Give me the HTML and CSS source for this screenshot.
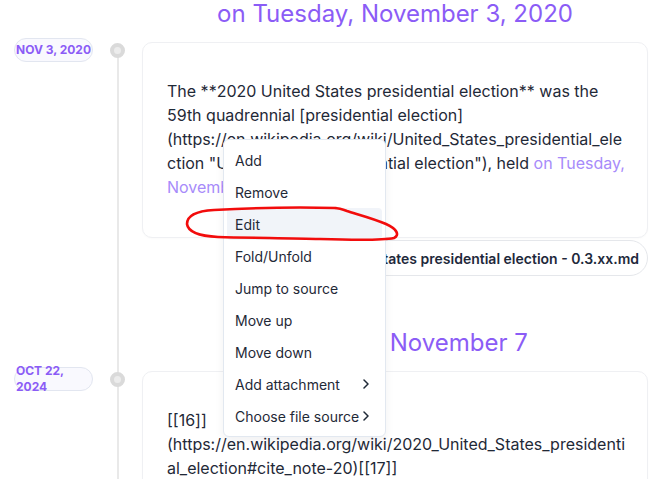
FILE: index.html
```html
<!DOCTYPE html>
<html lang="en">
<head>
<meta charset="utf-8">
<title>Timeline</title>
<link rel="stylesheet" href="styles.css">
</head>
<body>
<div class="timeline">
  <section class="item">
    <h2 class="item-heading">on Tuesday, November 3, 2020</h2>
    <div class="rail">
      <span class="date-pill"><span>NOV 3, 2020</span></span>
      <span class="dot"></span>
    </div>
    <div class="content">
      <div class="card">
        <p>The **2020 United States presidential election** was the 59th quadrennial [presidential election](https://en.wikipedia.org/wiki/United_States_presidential_election "United States presidential election"), held <span class="hl">on Tuesday, November 3, 2020</span>.</p>
      </div>
      <div class="source-row">
        <span class="source-pill">2020 United States presidential election - 0.3.xx.md</span>
      </div>
    </div>
  </section>
  <section class="item">
    <h2 class="item-heading item-heading--shifted">Saturday, November 7</h2>
    <div class="rail">
      <span class="date-pill"><span>OCT 22, 2024</span></span>
      <span class="dot"></span>
    </div>
    <div class="content">
      <div class="card">
        <p>[[16]](https://en.wikipedia.org/wiki/2020_United_States_presidential_election#cite_note-20)[[17]]</p>
      </div>
    </div>
  </section>
</div>

<ul class="context-menu">
  <li class="menu-item">Add</li>
  <li class="menu-item">Remove</li>
  <li class="menu-item is-hover">Edit</li>
  <li class="menu-item">Fold/Unfold</li>
  <li class="menu-item">Jump to source</li>
  <li class="menu-item">Move up</li>
  <li class="menu-item">Move down</li>
  <li class="menu-item">Add attachment <svg class="chev" width="6" height="10" viewBox="0 0 6 10"><path d="M1 1l4 4-4 4" fill="none" stroke="#1f2937" stroke-width="1.5" stroke-linecap="round" stroke-linejoin="round"/></svg></li>
  <li class="menu-item">Choose file source <svg class="chev" width="6" height="10" viewBox="0 0 6 10"><path d="M1 1l4 4-4 4" fill="none" stroke="#1f2937" stroke-width="1.5" stroke-linecap="round" stroke-linejoin="round"/></svg></li>
</ul>

<svg class="annotation" width="649" height="479" viewBox="0 0 649 479">
  <path d="M336 208 C 300 207, 250 208, 214 210 C 196 211, 187 216, 187 224 C 188 232, 199 236, 218 237 C 250 238, 290 238, 320 239 C 350 240, 380 241, 394 238 C 400 235, 397 229, 386 224 C 372 218, 356 214, 347 211 C 342 209, 339 208, 334 208"
        fill="none" stroke="#f20c0c" stroke-width="2.6" stroke-linecap="round" stroke-linejoin="round"/>
</svg>
</body>
</html>
```

FILE: styles.css
```css
html, body {
  margin: 0;
  padding: 0;
  overflow: hidden;
  background: #ffffff;
}

body {
  font-family: Inter, "Noto Sans", sans-serif;
  color: #1f2937;
  position: relative;
  width: 649px;
  height: 479px;
}

.timeline {
  position: relative;
}

.timeline::before {
  content: "";
  position: absolute;
  left: 117px;
  top: 49px;
  bottom: 0;
  width: 2px;
  background: #e9e9e9;
}

.item {
  display: grid;
  grid-template-columns: 142px 506px;
  align-items: start;
}

.item + .item {
  margin-top: 53px;
}

.item-heading {
  grid-column: 2;
  grid-row: 1;
  margin: 0 0 10px;
  text-align: center;
  font-size: 24px;
  line-height: 28px;
  font-weight: 400;
  color: #8b5cf6;
}

.item-heading--shifted {
  padding-left: 14px;
}

.rail {
  grid-column: 1;
  grid-row: 2;
  display: flex;
  align-items: center;
  height: 24px;
  padding-left: 14px;
  position: relative;
  z-index: 1;
}

.date-pill {
  box-sizing: border-box;
  width: 79px;
  height: 24px;
  flex: none;
  display: flex;
  align-items: center;
  justify-content: center;
  padding: 0 1px;
  border: 1px solid #e2e6f0;
  border-radius: 12px;
  background: #f9f9fe;
  color: #8b5cf6;
  font-size: 12px;
  font-weight: 700;
  line-height: 16px;
}

.dot {
  flex: none;
  box-sizing: border-box;
  width: 15px;
  height: 15px;
  margin-left: 17px;
  border-radius: 50%;
  background: #ececec;
  border: 4px solid #dadada;
}

.content {
  grid-column: 2;
  grid-row: 2;
  padding-top: 4px;
}

.card {
  box-sizing: border-box;
  width: 506px;
  padding: 36px 22px 38px 24px;
  border: 1px solid #eff0f3;
  border-radius: 10px;
  background: #fff;
  box-shadow: 0 1px 2px rgba(15, 23, 42, 0.02);
}

.card p {
  margin: 0;
  font-size: 16px;
  line-height: 24px;
  color: #1f2937;
  overflow-wrap: anywhere;
}

.hl {
  color: #a78bfa;
}

.source-row {
  display: flex;
  justify-content: flex-end;
  margin-top: 2px;
}

.source-pill {
  box-sizing: border-box;
  height: 36px;
  display: flex;
  align-items: center;
  padding: 0 8px 0 14px;
  border: 1px solid #e5e7eb;
  border-radius: 18px;
  font-size: 14px;
  font-weight: 600;
  color: #1e293b;
  white-space: nowrap;
}

.context-menu {
  position: absolute;
  left: 223px;
  top: 139px;
  z-index: 5;
  box-sizing: border-box;
  width: 163px;
  margin: 0;
  padding: 4px 0;
  list-style: none;
  background: #fff;
  border: 1px solid #e2e8f0;
  border-radius: 6px;
  box-shadow: 0 4px 10px rgba(15, 23, 42, 0.06);
}

.menu-item {
  display: flex;
  align-items: center;
  height: 32px;
  margin: 0 3px;
  padding: 0 13px 0 8px;
  border-radius: 4px;
  font-size: 14px;
  color: #1f2937;
  white-space: nowrap;
}

.menu-item.is-hover {
  background: #f1f4f9;
}

.chev {
  margin-left: auto;
  flex: none;
}

.annotation {
  position: absolute;
  left: 0;
  top: 0;
  z-index: 6;
  pointer-events: none;
}
```
